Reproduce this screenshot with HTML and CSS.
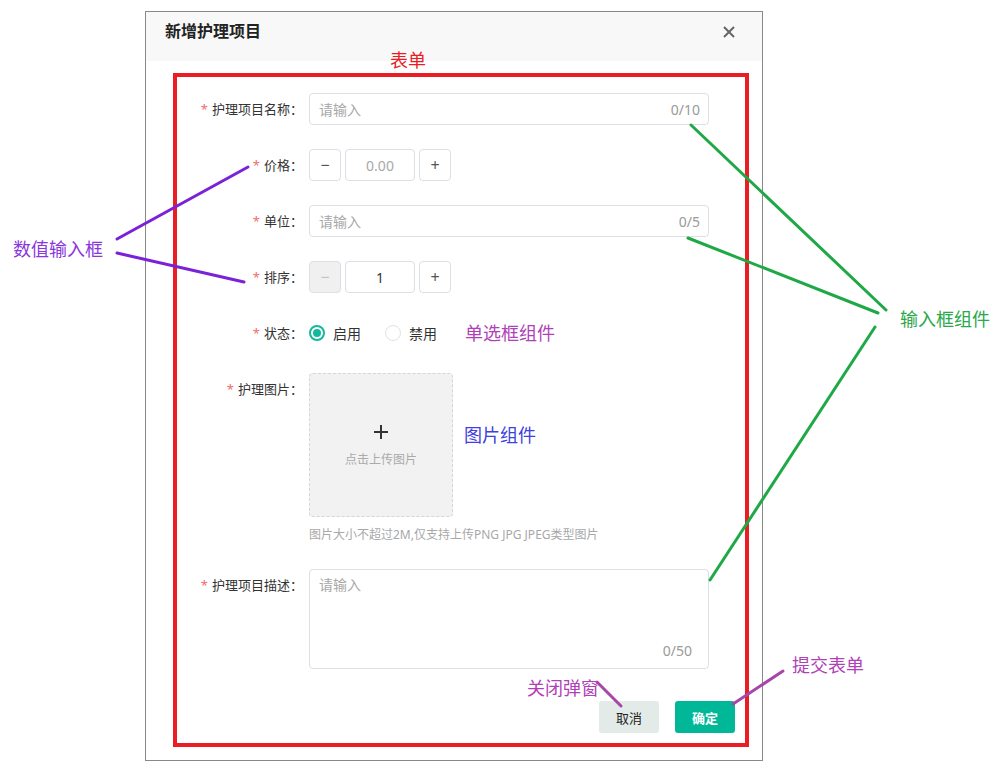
FILE: index.html
```html
<!DOCTYPE html>
<html lang="zh-CN">
<head>
<meta charset="utf-8">
<title>新增护理项目</title>
<link rel="stylesheet" href="styles.css">
</head>
<body>
<div class="dialog">
  <div class="dialog-header">
    <span class="dialog-title">新增护理项目</span>
    <svg class="close" width="12" height="12" viewBox="0 0 12 12"><path d="M1 1L11 11M11 1L1 11" stroke="#666" stroke-width="2" fill="none"/></svg>
  </div>
  <div class="form-box">
    <div class="form-item">
      <label class="label"><span class="req">*</span>护理项目名称：</label>
      <div class="field input"><span class="ph">请输入</span><span class="count">0/10</span></div>
    </div>
    <div class="form-item">
      <label class="label"><span class="req">*</span>价格：</label>
      <div class="number">
        <span class="nbtn">−</span>
        <span class="nval ph">0.00</span>
        <span class="nbtn">+</span>
      </div>
    </div>
    <div class="form-item">
      <label class="label"><span class="req">*</span>单位：</label>
      <div class="field input"><span class="ph">请输入</span><span class="count">0/5</span></div>
    </div>
    <div class="form-item">
      <label class="label"><span class="req">*</span>排序：</label>
      <div class="number">
        <span class="nbtn disabled">−</span>
        <span class="nval">1</span>
        <span class="nbtn">+</span>
      </div>
    </div>
    <div class="form-item">
      <label class="label"><span class="req">*</span>状态：</label>
      <div class="radios">
        <span class="radio checked"></span><span class="rtext">启用</span>
        <span class="radio"></span><span class="rtext">禁用</span>
      </div>
    </div>
    <div class="form-item upload-item">
      <label class="label"><span class="req">*</span>护理图片：</label>
      <div class="upload-col">
        <div class="upload">
          <svg class="plus" width="14" height="14" viewBox="0 0 14 14"><path d="M7 0V14M0 7H14" stroke="#333" stroke-width="2" fill="none"/></svg>
          <span class="upload-text">点击上传图片</span>
        </div>
        <div class="hint">图片大小不超过2M,仅支持上传PNG JPG JPEG类型图片</div>
      </div>
    </div>
    <div class="form-item">
      <label class="label"><span class="req">*</span>护理项目描述：</label>
      <div class="field textarea"><span class="ph">请输入</span><span class="count">0/50</span></div>
    </div>
    <div class="footer">
      <button class="btn cancel">取消</button>
      <button class="btn ok">确定</button>
    </div>
  </div>
</div>

<svg class="lines" width="1006" height="770" viewBox="0 0 1006 770">
  <g stroke="#7a22d8" stroke-width="3" stroke-linecap="round">
    <line x1="117" y1="239" x2="248" y2="167"/>
    <line x1="117" y1="253" x2="244" y2="282"/>
  </g>
  <g stroke="#1fa846" stroke-width="3" stroke-linecap="round">
    <line x1="691" y1="125" x2="886" y2="310"/>
    <line x1="688" y1="238" x2="878" y2="313"/>
    <line x1="875" y1="327" x2="710" y2="580"/>
  </g>
  <g stroke="#a546a8" stroke-width="3" stroke-linecap="round">
    <line x1="597" y1="682" x2="621" y2="706"/>
    <line x1="783" y1="671" x2="733" y2="704"/>
  </g>
</svg>
<div class="note n-form">表单</div>
<div class="note n-number">数值输入框</div>
<div class="note n-input">输入框组件</div>
<div class="note n-radio">单选框组件</div>
<div class="note n-image">图片组件</div>
<div class="note n-close">关闭弹窗</div>
<div class="note n-submit">提交表单</div>
</body>
</html>
```
FILE: styles.css
```css
* { box-sizing: border-box; }
html, body { margin: 0; }
body {
  position: relative;
  width: 1006px;
  height: 770px;
  padding: 11px 0 0 145px;
  background: #fff;
  font-family: "Noto Sans", "Noto Sans CJK SC", sans-serif;
  color: #333;
  overflow: hidden;
}
.dialog {
  width: 618px;
  height: 750px;
  border: 1px solid #888;
  background: #fff;
}
.dialog-header {
  height: 49px;
  background: #f8f8f8;
  display: flex;
  justify-content: space-between;
  align-items: flex-start;
  padding: 7px 27px 0 19px;
}
.dialog-title {
  font-size: 16px;
  font-weight: bold;
  line-height: 24px;
  color: #222;
}
.close { margin-top: 7px; }
.form-box {
  margin: 12px 13px 0 27px;
  border: 4px solid #ea1c24;
  padding: 16px 10px 10px 0;
}
.form-item {
  display: flex;
  align-items: flex-start;
  margin-bottom: 24px;
}
.label {
  width: 132px;
  padding-right: 6px;
  text-align: right;
  font-size: 13px;
  line-height: 32px;
  color: #333;
}
.req { color: #f06c6c; margin-right: 4px; }
.field {
  position: relative;
  width: 400px;
  border: 1px solid #dcdfe6;
  border-radius: 4px;
  background: #fff;
  font-size: 14px;
}
.input {
  height: 32px;
  display: flex;
  align-items: center;
  justify-content: space-between;
  padding: 0 8px 0 9px;
}
.ph { color: #a8a8a8; }
.count { color: #9a9a9a; font-size: 14px; }
.number { display: flex; gap: 4px; }
.nbtn {
  width: 32px;
  height: 32px;
  border: 1px solid #dcdfe6;
  border-radius: 4px;
  display: flex;
  align-items: center;
  justify-content: center;
  font-size: 16px;
  color: #555;
  background: #fff;
}
.nbtn.disabled { background: #f0f0f0; color: #c4c4c4; }
.nval {
  width: 70px;
  height: 32px;
  border: 1px solid #dcdfe6;
  border-radius: 4px;
  display: flex;
  align-items: center;
  justify-content: center;
  font-size: 14px;
}
.radios {
  display: flex;
  align-items: center;
  height: 32px;
  font-size: 14px;
}
.radio {
  width: 16px;
  height: 16px;
  border-radius: 50%;
  border: 1px solid #e2e2e2;
  margin-right: 8px;
}
.radio.checked {
  border: 2px solid #14b89a;
  display: flex;
  align-items: center;
  justify-content: center;
}
.radio.checked::after {
  content: "";
  width: 8px;
  height: 8px;
  border-radius: 50%;
  background: #14b89a;
}
.rtext { margin-right: 24px; color: #333; }
.upload {
  width: 144px;
  height: 144px;
  border: 1px dashed #d6d6d6;
  border-radius: 4px;
  background: #f2f2f2;
  display: flex;
  flex-direction: column;
  align-items: center;
  padding-top: 51px;
}
.upload-text {
  margin-top: 14px;
  font-size: 12px;
  line-height: 14px;
  color: #aaa;
}
.hint {
  margin-top: 8px;
  font-size: 12px;
  line-height: 20px;
  color: #a8a8a8;
  white-space: nowrap;
}
.textarea {
  height: 100px;
  padding: 5px 9px;
  line-height: 20px;
}
.textarea .count {
  position: absolute;
  right: 16px;
  bottom: 7px;
}
.footer {
  display: flex;
  justify-content: flex-end;
  gap: 16px;
  margin-top: 32px;
}
.btn {
  width: 60px;
  height: 32px;
  border: none;
  border-radius: 3px;
  font-family: inherit;
  font-size: 13px;
}
.cancel { background: #e2ebe8; color: #222; }
.ok { background: #00b898; color: #fff; font-weight: bold; }
.lines {
  position: absolute;
  left: 0;
  top: 0;
  pointer-events: none;
}
.note {
  position: absolute;
  font-size: 18px;
  line-height: 24px;
  white-space: nowrap;
}
.n-form { left: 390px; top: 48px; color: #ea1c24; }
.n-number { left: 13px; top: 237px; color: #8a36de; }
.n-input { left: 900px; top: 307px; color: #2aa84a; }
.n-radio { left: 465px; top: 321px; color: #b03fb8; }
.n-image { left: 464px; top: 423px; color: #3e40e0; }
.n-close { left: 527px; top: 676px; color: #b03fb8; }
.n-submit { left: 792px; top: 653px; color: #b03fb8; }
```
